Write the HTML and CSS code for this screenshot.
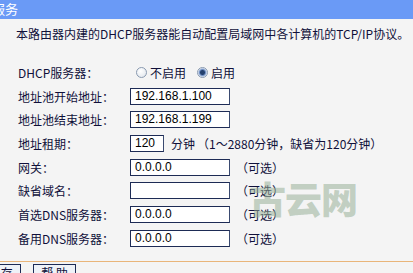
FILE: index.html
```
<!DOCTYPE html>
<html>
<head>
<meta charset="utf-8">
<link rel="stylesheet" href="styles.css">
</head>
<body>
<div class="titlebar">服务</div>
<p class="desc">本路由器内建的DHCP服务器能自动配置局域网中各计算机的TCP/IP协议。</p>
<div class="form">
  <div class="row">
    <span class="label">DHCP服务器：</span>
    <div class="ctrl radios">
      <span class="radio"></span><span class="rlabel">不启用</span>
      <span class="radio on"></span><span class="rlabel">启用</span>
    </div>
  </div>
  <div class="row">
    <span class="label">地址池开始地址：</span>
    <div class="ctrl"><span class="input">192.168.1.100</span></div>
  </div>
  <div class="row">
    <span class="label">地址池结束地址：</span>
    <div class="ctrl"><span class="input">192.168.1.199</span></div>
  </div>
  <div class="row">
    <span class="label">地址租期：</span>
    <div class="ctrl"><span class="input short">120</span><span class="unit">分钟</span><span class="hint">（1～2880分钟，缺省为120分钟）</span></div>
  </div>
  <div class="row">
    <span class="label">网关：</span>
    <div class="ctrl"><span class="input">0.0.0.0</span><span class="opt">（可选）</span></div>
  </div>
  <div class="row">
    <span class="label">缺省域名：</span>
    <div class="ctrl"><span class="input"></span><span class="opt">（可选）</span></div>
  </div>
  <div class="row">
    <span class="label">首选DNS服务器：</span>
    <div class="ctrl"><span class="input">0.0.0.0</span><span class="opt">（可选）</span></div>
  </div>
  <div class="row">
    <span class="label">备用DNS服务器：</span>
    <div class="ctrl"><span class="input">0.0.0.0</span><span class="opt">（可选）</span></div>
  </div>
</div>
<div class="rule"></div>
<div class="buttons">
  <span class="btn">保 存</span>
  <span class="btn">帮 助</span>
</div>
<div class="watermark">古云网</div>
</body>
</html>
```
FILE: styles.css
```
html, body {
  margin: 0;
  padding: 0;
}
body {
  width: 413px;
  height: 273px;
  overflow: hidden;
  position: relative;
  background: #f4f4f4;
  color: #10103a;
  font-family: "Noto Sans CJK SC", "Noto Sans", sans-serif;
  font-size: 12px;
}
.titlebar {
  height: 19px;
  line-height: 18px;
  background: #6a9af6;
  color: #ffffff;
  font-size: 13px;
  text-indent: -8px;
  overflow: hidden;
}
.desc {
  margin: 0;
  padding: 7px 0 0 16px;
  line-height: 16px;
  height: 17px;
  white-space: nowrap;
}
.form {
  padding-top: 17.5px;
  display: flex;
  flex-direction: column;
}
.row {
  height: 23.7px;
  display: flex;
  align-items: center;
}
.label {
  width: 112px;
  padding-left: 18px;
  flex: none;
  white-space: nowrap;
}
.ctrl {
  display: flex;
  align-items: center;
  white-space: nowrap;
}
.radios .radio {
  width: 9px;
  height: 9px;
  border-radius: 50%;
  border: 1px solid #8a9ab0;
  background: radial-gradient(circle at 40% 35%, #ffffff, #dde3ea);
  margin-left: 6px;
  margin-right: 3px;
}
.radios .radio.on {
  margin-left: 11px;
  background: radial-gradient(circle, #24406e 0 2px, #6f8fc4 3px, #e5ecf6 4.5px);
}
.input {
  box-sizing: border-box;
  width: 100px;
  height: 17px;
  border: 1px solid #1d2b55;
  border-right-color: #3a4a70;
  background: #ffffff;
  font-family: "Liberation Sans", Arial, sans-serif;
  font-size: 12px;
  line-height: 15px;
  padding-left: 4px;
  color: #000;
}
.input.short {
  width: 34px;
}
.unit {
  margin-left: 7px;
}
.hint {
  margin-left: 2px;
}
.opt {
  margin-left: 6px;
}
.rule {
  margin-top: 11px;
  height: 1px;
  background: #e9b57a;
}
.buttons {
  display: flex;
  gap: 12px;
  margin-left: -22px;
  padding-top: 2px;
}
.btn {
  box-sizing: border-box;
  width: 43px;
  height: 18px;
  border: 1px solid #1d2b55;
  border-bottom: none;
  background: #eef2f8;
  text-align: center;
  line-height: 16px;
  font-size: 12px;
}
.watermark {
  position: absolute;
  left: 249px;
  top: 176px;
  font-size: 37px;
  font-weight: 900;
  letter-spacing: -1px;
  color: rgba(150, 175, 150, 0.55);
  pointer-events: none;
  line-height: 44px;
}
```
